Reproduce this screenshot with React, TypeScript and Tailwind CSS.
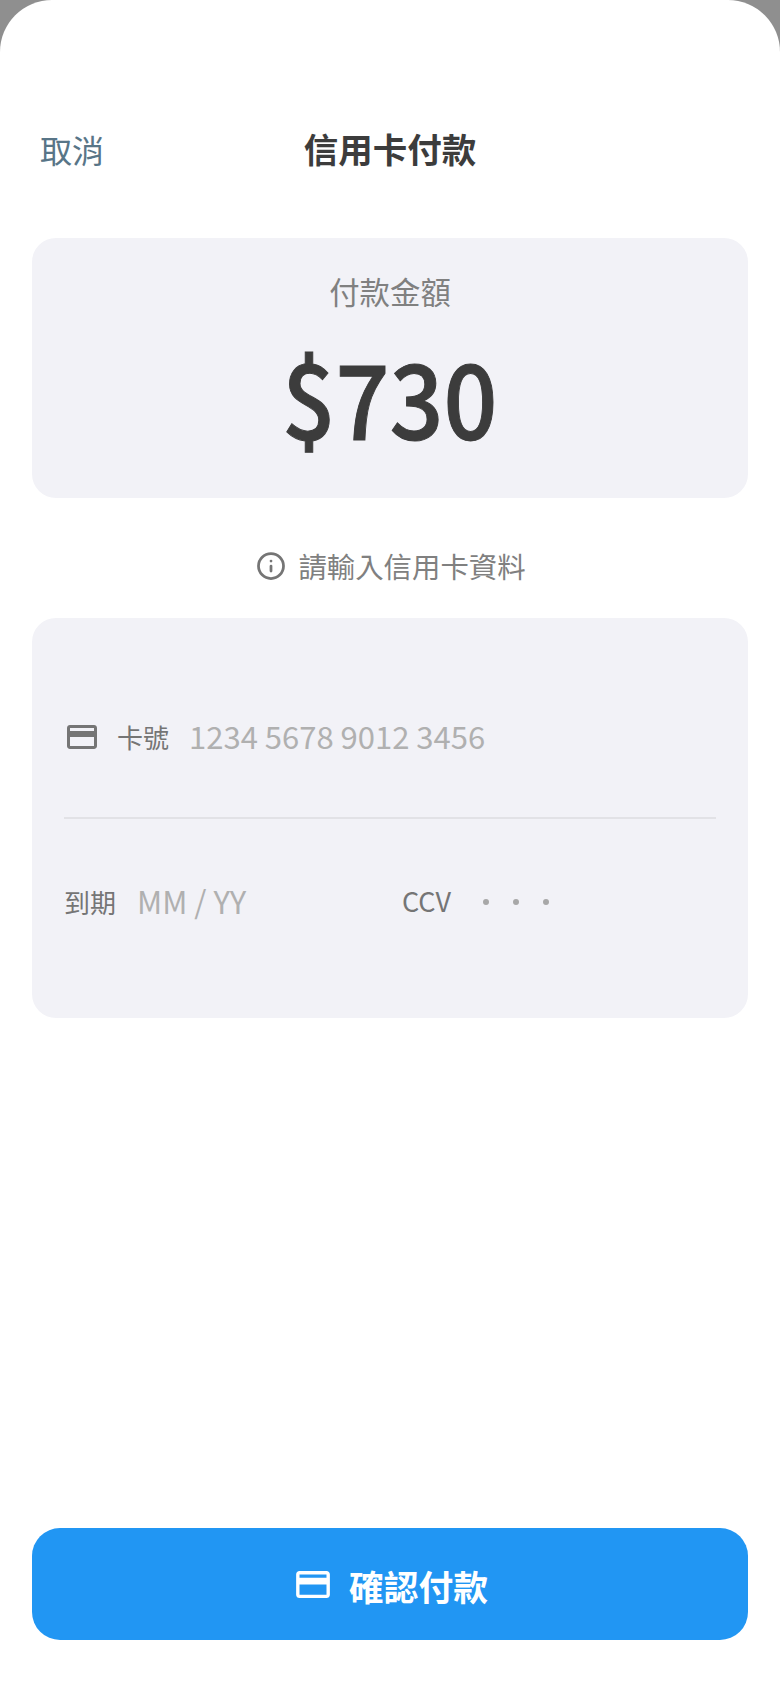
import { Info } from "lucide-react"

function CardIcon({ className, color }: { className: string; color: string }) {
  return (
    <svg viewBox="2 4 20 16" className={className} fill={color}>
      <path d="M20 4H4c-1.11 0-1.99.89-1.99 2L2 18c0 1.11.89 2 2 2h16c1.11 0 2-.89 2-2V6c0-1.11-.89-2-2-2zm0 14H4v-6h16v6zm0-10H4V6h16v2z" />
    </svg>
  )
}

export default function App() {
  return (
    <div className="h-[1688px] w-[780px] bg-[#8f8f8f] font-['Noto_Sans_CJK_TC','Noto_Sans',sans-serif]">
      <div className="flex h-full flex-col rounded-t-[52px] bg-white px-8">
        {/* Header */}
        <div className="mt-[117px] mb-[1px] grid h-[64px] grid-cols-[1fr_auto_1fr] items-center">
          <span className="pl-2 text-[32px] text-[#587587]">取消</span>
          <h1 className="text-[34.5px] font-bold text-[#3c3c3c]">信用卡付款</h1>
        </div>

        {/* Amount */}
        <div className="mt-[56px] flex h-[260px] flex-col items-center rounded-[24px] bg-[#f2f2f7] pt-[31px]">
          <p className="text-[30.4px] leading-[44px] text-[#808080]">付款金額</p>
          <p className="mt-[7px] scale-x-[.91] text-[104px] leading-[150px] font-medium text-[#3c3c3c] [-webkit-text-stroke:1px_#3c3c3c]">$730</p>
        </div>

        <div className="mt-[48px] mb-[2px] flex h-[40px] items-center justify-center gap-3 pl-[2px]">
          <Info className="h-[30px] w-[30px] text-[#757575]" strokeWidth={2.2} />
          <span className="text-[28.4px] text-[#808080]">請輸入信用卡資料</span>
        </div>

        {/* Card form */}
        <div className="mt-[30px] flex h-[400px] flex-col rounded-[24px] bg-[#f2f2f7] px-8">
          <div className="flex h-[201px] items-center border-b-2 border-[#e2e2e6] pt-[38px]">
            <CardIcon className="ml-[3px] h-6 w-[30px]" color="#757575" />
            <span className="ml-5 text-[26px] text-[#757575]">卡號</span>
            <span className="ml-[20px] text-[31px] text-[#b0b0b0]">1234 5678 9012 3456</span>
          </div>
          <div className="flex h-[165px] items-center">
            <div className="flex w-[338px] items-center">
              <span className="text-[26px] text-[#757575]">到期</span>
              <span className="ml-[21px] text-[31px] text-[#b0b0b0]">MM / YY</span>
            </div>
            <span className="text-[27px] text-[#757575]">CCV</span>
            <div className="ml-[32px] flex gap-[24px]">
              <span className="h-[6px] w-[6px] rounded-full bg-[#a8a8a8]" />
              <span className="h-[6px] w-[6px] rounded-full bg-[#a8a8a8]" />
              <span className="h-[6px] w-[6px] rounded-full bg-[#a8a8a8]" />
            </div>
          </div>
        </div>

        {/* Submit */}
        <button className="mt-[510px] flex h-[112px] items-center justify-center gap-[19px] rounded-[28px] bg-[#2196f3] pl-[4px]">
          <CardIcon className="h-[27px] w-[34px]" color="#ffffff" />
          <span className="pt-[5px] text-[34.8px] font-bold text-white">確認付款</span>
        </button>
      </div>
    </div>
  )
}
